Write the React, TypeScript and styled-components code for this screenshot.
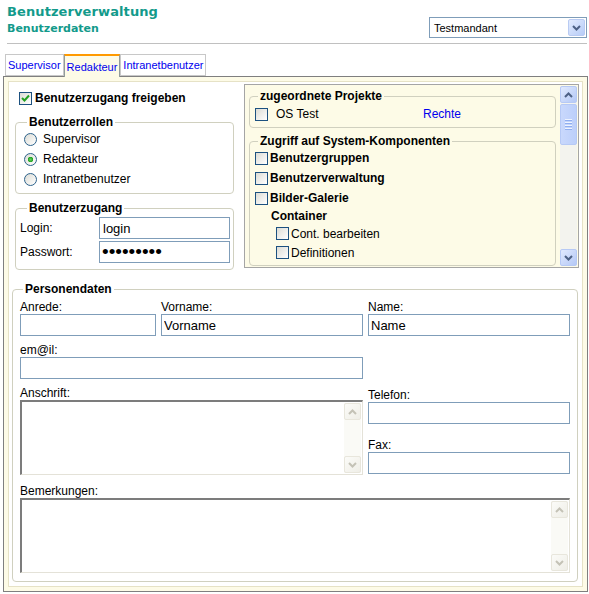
import React from 'react';
import styled, { createGlobalStyle } from 'styled-components';

// Grundstile
const GlobalStyle = createGlobalStyle`
  body {
    margin: 0;
    background: #fff;
    font-family: "Liberation Sans", Arial, sans-serif;
    font-size: 12px;
    color: #000;
  }
  * { box-sizing: border-box; }
`;

const CREAM = '#fdfbe7';

// XP-Scrollbar
const ScrollBar = ({ active }: { active?: boolean }) => (
  <Track $active={active}>
    <ScrollButton $active={active}>
      <svg width="9" height="6" viewBox="0 0 9 6">
        <polyline points="1,5 4.5,1.5 8,5" fill="none" stroke={active ? '#4d6185' : '#c4c2b6'} strokeWidth="2" />
      </svg>
    </ScrollButton>
    {active && (
      <Thumb>
        <Grip />
        <Grip />
        <Grip />
        <Grip />
      </Thumb>
    )}
    <Spacer />
    <ScrollButton $active={active}>
      <svg width="9" height="6" viewBox="0 0 9 6">
        <polyline points="1,1 4.5,4.5 8,1" fill="none" stroke={active ? '#4d6185' : '#c4c2b6'} strokeWidth="2" />
      </svg>
    </ScrollButton>
  </Track>
);

const CheckBox = ({ checked }: { checked?: boolean }) => (
  <Box>
    {checked && (
      <svg width="9" height="9" viewBox="0 0 9 9">
        <polyline points="1,4 3.5,6.5 8,1.5" fill="none" stroke="#21a121" strokeWidth="2" />
      </svg>
    )}
  </Box>
);

const Field = ({ label, value, wide }: { label: string; value?: string; wide?: boolean }) => (
  <FieldWrap $wide={wide}>
    <FieldLabel>{label}</FieldLabel>
    <TextInput defaultValue={value} />
  </FieldWrap>
);

const Rollen = ['Supervisor', 'Redakteur', 'Intranetbenutzer'];

const App = () => {
  return (
    <Page>
      <GlobalStyle />
      <Header>
        <div>
          <Title>Benutzerverwaltung</Title>
          <SubTitle>Benutzerdaten</SubTitle>
        </div>
        <Mandant>
          <span>Testmandant</span>
          <DropButton>
            <svg width="9" height="6" viewBox="0 0 9 6">
              <polyline points="1,1 4.5,4.5 8,1" fill="none" stroke="#4d6185" strokeWidth="2" />
            </svg>
          </DropButton>
        </Mandant>
      </Header>
      <Rule />

      <TabBar>
        {Rollen.map((r) => (
          <Tab key={r} $active={r === 'Redakteur'}>{r}</Tab>
        ))}
      </TabBar>

      <Panel>
        <Inner>
          <TopRow>
            <LeftCol>
              <CheckRow>
                <CheckBox checked />
                <BoldText>Benutzerzugang freigeben</BoldText>
              </CheckRow>

              <GroupBox $pad="0 6px 4px 8px" $gap={9}>
                <Legend>Benutzerrollen</Legend>
                {Rollen.map((r) => (
                  <RadioRow key={r}>
                    <Radio $checked={r === 'Redakteur'} />
                    {r}
                  </RadioRow>
                ))}
              </GroupBox>

              <GroupBox $pad="0 3px 6px 4px" $gap={7}>
                <Legend $offset={7}>
                  Benutzerzugang
                </Legend>
                <LoginGrid>
                  <span>Login:</span>
                  <SmallInput defaultValue="login" />
                  <span>Passwort:</span>
                  <SmallInput type="password" defaultValue="123456789" />
                </LoginGrid>
              </GroupBox>
            </LeftCol>

            <ScrollBox>
              <ScrollContent>
                <GroupBox $pad="0 5px 3px 5px">
                  <Legend $offset={3}>zugeordnete Projekte</Legend>
                  <ProjektRow>
                    <CheckBox />
                    <span>OS Test</span>
                    <LinkText>Rechte</LinkText>
                  </ProjektRow>
                </GroupBox>

                <GroupBox $pad="0 5px 3px 5px" $gap={6}>
                  <Legend $offset={3}>Zugriff auf System-Komponenten</Legend>
                  <KompRow><CheckBox /><BoldText>Benutzergruppen</BoldText></KompRow>
                  <KompRow><CheckBox /><BoldText>Benutzerverwaltung</BoldText></KompRow>
                  <KompRow><CheckBox /><BoldText>Bilder-Galerie</BoldText></KompRow>
                  <SubHead>Container</SubHead>
                  <KompRow $sub><CheckBox /><span>Cont. bearbeiten</span></KompRow>
                  <KompRow $sub><CheckBox /><span>Definitionen</span></KompRow>
                </GroupBox>
              </ScrollContent>
              <ScrollBar active />
            </ScrollBox>
          </TopRow>

          <PersonBox>
            <Legend $offset={3}>Personendaten</Legend>
            <PersonGrid>
              <Field label="Anrede:" />
              <Field label="Vorname:" value="Vorname" />
              <Field label="Name:" value="Name" />

              <Field label="em@il:" wide />
              <div />

              <FieldWrap $wide>
                <FieldLabel>Anschrift:</FieldLabel>
                <AreaBox $height={75}>
                  <Area />
                  <ScrollBar />
                </AreaBox>
              </FieldWrap>
              <StackCol>
                <Field label="Telefon:" />
                <Field label="Fax:" />
              </StackCol>

              <FieldWrap $full>
                <FieldLabel>Bemerkungen:</FieldLabel>
                <AreaBox $height={75}>
                  <Area />
                  <ScrollBar />
                </AreaBox>
              </FieldWrap>
            </PersonGrid>
          </PersonBox>
        </Inner>
      </Panel>
    </Page>
  );
};

export default App;

// Stile
const Page = styled.div`
  width: 589px;
  padding: 0 1px 0 3px;
`;

const Header = styled.div`
  display: flex;
  justify-content: space-between;
  align-items: flex-start;
  padding: 3px 1px 0 4px;
  height: 43px;
`;

const Title = styled.h1`
  margin: 0;
  font-family: "DejaVu Sans", Verdana, sans-serif;
  font-size: 13px;
  letter-spacing: 0.1px;
  line-height: 17px;
  font-weight: bold;
  color: #139a8b;
`;

const SubTitle = styled.h2`
  margin: 2px 0 0;
  font-family: "DejaVu Sans", Verdana, sans-serif;
  font-size: 11px;
  line-height: 14px;
  font-weight: bold;
  color: #139a8b;
`;

const Mandant = styled.div`
  margin-top: 14px;
  width: 158px;
  height: 21px;
  border: 1px solid #7f9db9;
  display: flex;
  align-items: center;
  justify-content: space-between;
  padding: 0 1px 0 4px;
  font-size: 11px;
  background: #fff;
`;

const DropButton = styled.div`
  width: 17px;
  height: 17px;
  border: 1px solid #b9cbf3;
  border-radius: 2px;
  background: linear-gradient(135deg, #e2ebfe, #b7ccf7);
  display: flex;
  align-items: center;
  justify-content: center;
`;

const Rule = styled.hr`
  margin: 0 1px 0 4px;
  border: 0;
  border-top: 1px solid #c0c0c0;
`;

const TabBar = styled.div`
  display: flex;
  align-items: flex-end;
  margin-top: 10px;
  padding-left: 2px;
  height: 22px;
`;

const Tab = styled.div<{ $active?: boolean }>`
  position: relative;
  z-index: 1;
  height: ${(p) => (p.$active ? '23px' : '22px')};
  margin-bottom: ${(p) => (p.$active ? '-1px' : '0')};
  padding: 0 2px;
  display: flex;
  align-items: center;
  font-size: 11px;
  color: #0000ee;
  background: ${(p) => (p.$active ? CREAM : '#fff')};
  border: 1px solid ${(p) => (p.$active ? '#919b9c' : '#c8c8c8')};
  border-top: ${(p) => (p.$active ? '2px solid #ff9a00' : '1px solid #c8c8c8')};
  border-bottom: ${(p) => (p.$active ? 'none' : '1px solid #c8c8c8')};
`;

const Panel = styled.div`
  border: 1px solid #7f7f7f;
  background: ${CREAM};
  padding: 4px;
`;

const Inner = styled.div`
  background: #fff;
  border: 1px solid #e6e2c6;
  padding: 2px 3px 4px 3px;
`;

const TopRow = styled.div`
  display: flex;
  gap: 10px;
  padding-left: 3px;
`;

const LeftCol = styled.div`
  width: 219px;
  display: flex;
  flex-direction: column;
`;

const CheckRow = styled.div`
  display: flex;
  align-items: center;
  gap: 3px;
  height: 16px;
  margin: 6px 0 0 4px;
`;

const BoldText = styled.span`
  font-weight: bold;
`;

const GroupBox = styled.fieldset<{ $pad?: string; $gap?: number }>`
  margin: ${(p) => p.$gap || 0}px 0 0;
  padding: ${(p) => p.$pad || '0 6px 4px'};
  border: 1px solid #d0d0bf;
  border-radius: 4px;
  min-width: 0;
`;

const Legend = styled.legend<{ $offset?: number }>`
  margin-left: ${(p) => p.$offset ?? 3}px;
  padding: 0 2px;
  font-weight: bold;
  line-height: 14px;
`;

const RadioRow = styled.label`
  display: flex;
  align-items: center;
  gap: 6px;
  height: 20px;
`;

const Radio = styled.span<{ $checked?: boolean }>`
  width: 13px;
  height: 13px;
  border-radius: 50%;
  border: 1px solid #2c628b;
  background: ${(p) =>
    p.$checked
      ? 'radial-gradient(circle, #62d162 0, #21a121 2.5px, transparent 3px), linear-gradient(135deg, #dcdcd5, #fff)'
      : 'linear-gradient(135deg, #dcdcd5, #fff)'};
  flex: none;
`;

const LoginGrid = styled.div`
  display: grid;
  grid-template-columns: 79px 131px;
  row-gap: 2px;
  align-items: center;
  padding-top: 2px;
`;

const SmallInput = styled.input`
  height: 22px;
  width: 131px;
  border: 1px solid #7f9db9;
  padding: 0 3px;
  font-family: "Liberation Sans", Arial, sans-serif;
  font-size: 13px;
  outline: none;
  &[type='password'] {
    font-size: 19px;
    padding-left: 2px;
  }
`;

const ScrollBox = styled.div`
  width: 337px;
  height: 184px;
  border: 1px solid #a5a5a5;
  padding: 1px;
  background: ${CREAM};
  display: flex;
`;

const ScrollContent = styled.div`
  flex: 1;
  overflow: hidden;
  padding: 3px 4px 0 3px;
`;

const ProjektRow = styled.div`
  display: grid;
  grid-template-columns: 21px 147px auto;
  align-items: center;
  height: 20px;
  margin-top: 1px;
`;

const LinkText = styled.span`
  color: #0000ee;
`;

const KompRow = styled.div<{ $sub?: boolean }>`
  display: flex;
  align-items: center;
  gap: 2px;
  height: ${(p) => (p.$sub ? '19px' : '20px')};
  padding-left: ${(p) => (p.$sub ? '21px' : '0')};
`;

const SubHead = styled.div`
  font-weight: bold;
  height: 16px;
  line-height: 16px;
  padding-left: 16px;
`;

const Box = styled.span`
  width: 13px;
  height: 13px;
  border: 1px solid #1c5180;
  background: linear-gradient(135deg, #dcdcd5, #fff);
  display: inline-flex;
  align-items: center;
  justify-content: center;
  flex: none;
`;

const Track = styled.div<{ $active?: boolean }>`
  width: 17px;
  flex: none;
  display: flex;
  flex-direction: column;
  background: ${(p) => (p.$active ? '#f3f3ee' : '#fafaf6')};
`;

const ScrollButton = styled.div<{ $active?: boolean }>`
  height: 17px;
  border-radius: 2px;
  border: 1px solid ${(p) => (p.$active ? '#b6c9f5' : '#e8e6dc')};
  background: ${(p) =>
    p.$active ? 'linear-gradient(135deg, #e1eafe, #b4c8f6)' : 'linear-gradient(135deg, #fbfbf8, #efeee7)'};
  display: flex;
  align-items: center;
  justify-content: center;
`;

const Thumb = styled.div`
  height: 41px;
  margin-top: 1px;
  border-radius: 2px;
  border: 1px solid #b6c9f5;
  background: linear-gradient(90deg, #c9d8fc, #bccffa);
  display: flex;
  flex-direction: column;
  align-items: center;
  justify-content: center;
  gap: 1px;
`;

const Grip = styled.div`
  width: 7px;
  height: 1px;
  background: #eef3fe;
  box-shadow: 0 1px 0 #8faef0;
  margin-bottom: 1px;
`;

const Spacer = styled.div`
  flex: 1;
`;

const PersonBox = styled.fieldset`
  margin: 12px 1px 0 0;
  padding: 4px 8px 8px 7px;
  border: 1px solid #d0d0bf;
  border-radius: 4px;
  min-width: 0;
`;

const PersonGrid = styled.div`
  display: grid;
  grid-template-columns: 136px 202px 202px;
  column-gap: 5px;
  row-gap: 7px;
`;

const FieldWrap = styled.div<{ $wide?: boolean; $full?: boolean }>`
  display: flex;
  flex-direction: column;
  grid-column: ${(p) => (p.$full ? 'span 3' : p.$wide ? 'span 2' : 'auto')};
  margin-top: ${(p) => (p.$full ? '2px' : '0')};
`;

const FieldLabel = styled.label`
  line-height: 14px;
  height: 14px;
`;

const TextInput = styled.input`
  height: 22px;
  width: 100%;
  border: 1px solid #7f9db9;
  padding: 0 2px;
  font-family: "Liberation Sans", Arial, sans-serif;
  font-size: 13px;
  outline: none;
`;

const StackCol = styled.div`
  display: flex;
  flex-direction: column;
  gap: 14px;
  padding-top: 2px;
`;

const AreaBox = styled.div<{ $height: number }>`
  height: ${(p) => p.$height}px;
  display: flex;
  border-style: solid;
  border-width: 2px 1px 1px 2px;
  border-color: #7c7c7c #e4e2d8 #e4e2d8 #7c7c7c;
  padding: 1px;
`;

const Area = styled.textarea`
  flex: 1;
  border: none;
  resize: none;
  outline: none;
  font-family: "Liberation Sans", Arial, sans-serif;
  font-size: 12px;
`;
